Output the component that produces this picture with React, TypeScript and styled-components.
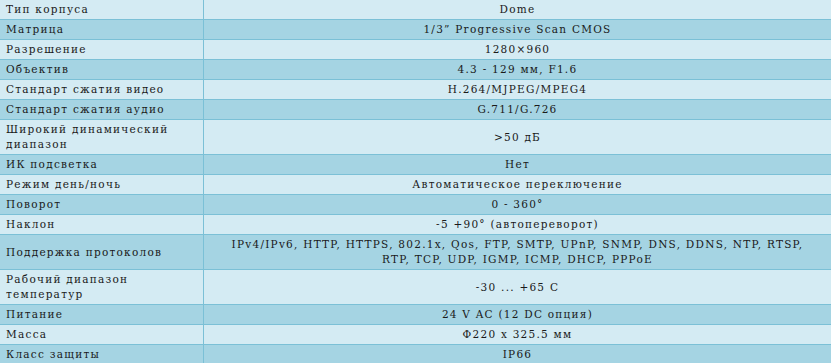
import styled, { createGlobalStyle } from "styled-components";

const GlobalStyle = createGlobalStyle`
  html, body {
    margin: 0;
    padding: 0;
    background: #d4ebf3;
    overflow: hidden;
  }
`;

type Spec = { name: string; value: React.ReactNode };

const specs: Spec[] = [
  { name: "Тип корпуса", value: "Dome" },
  { name: "Матрица", value: "1/3” Progressive Scan CMOS" },
  { name: "Разрешение", value: "1280×960" },
  { name: "Объектив", value: "4.3 - 129 мм, F1.6" },
  { name: "Стандарт сжатия видео", value: "H.264/MJPEG/MPEG4" },
  { name: "Стандарт сжатия аудио", value: "G.711/G.726" },
  { name: "Широкий динамический диапазон", value: ">50 дБ" },
  { name: "ИК подсветка", value: "Нет" },
  { name: "Режим день/ночь", value: "Автоматическое переключение" },
  { name: "Поворот", value: "0 - 360°" },
  { name: "Наклон", value: "-5 +90° (автопереворот)" },
  {
    name: "Поддержка протоколов",
    value: (
      <>
        IPv4/IPv6, HTTP, HTTPS, 802.1x, Qos, FTP, SMTP, UPnP, SNMP, DNS, DDNS, NTP, RTSP,
        <br />
        RTP, TCP, UDP, IGMP, ICMP, DHCP, PPPoE
      </>
    ),
  },
  { name: "Рабочий диапазон температур", value: "-30 ... +65 C" },
  { name: "Питание", value: "24 V AC (12 DC опция)" },
  { name: "Масса", value: "Ф220 x 325.5 мм" },
  { name: "Класс защиты", value: "IP66" },
];

const App = () => {
  return (
    <>
      <GlobalStyle />
      <SpecTable>
        <tbody>
          {specs.map((spec, i) => (
            <Row key={spec.name} $odd={i % 2 === 1}>
              <NameCell>{spec.name}</NameCell>
              <ValueCell>{spec.value}</ValueCell>
            </Row>
          ))}
        </tbody>
      </SpecTable>
    </>
  );
};

const SpecTable = styled.table`
  width: 831px;
  border-collapse: separate;
  border-spacing: 0;
  table-layout: fixed;
  font-family: "DejaVu Serif", "Liberation Serif", serif;
  font-size: 10.5px;
  letter-spacing: 1.25px;
  color: #1a1a1a;
`;

const Row = styled.tr<{ $odd: boolean }>`
  background-color: ${(p) => (p.$odd ? "#a5d4e3" : "#d4ebf3")};
`;

const NameCell = styled.td`
  box-sizing: border-box;
  width: 204px;
  padding: 2px 0 2px 6px;
  line-height: 15px;
  border-right: 1px solid #7bc0d6;
  border-bottom: 1px solid #7bc0d6;
  vertical-align: middle;
`;

const ValueCell = styled.td`
  padding: 2px 4px;
  line-height: 15px;
  text-align: center;
  border-bottom: 1px solid #7bc0d6;
  vertical-align: middle;
`;

export default App;
